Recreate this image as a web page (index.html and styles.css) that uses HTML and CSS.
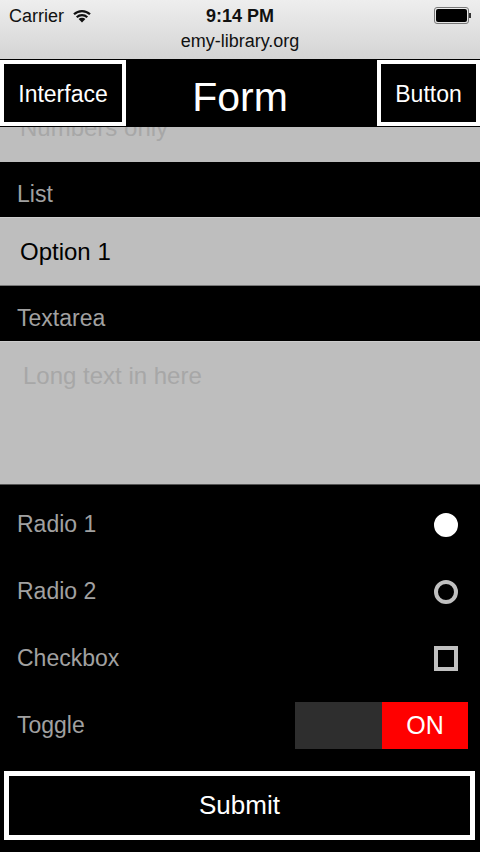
FILE: index.html
```html
<!DOCTYPE html>
<html lang="en">
<head>
  <meta charset="UTF-8" />
  <meta name="viewport" content="width=device-width, initial-scale=1.0" />
  <title>Form</title>
  <link rel="stylesheet" href="styles.css">
</head>
<body>
  <div class="chrome">
    <div class="status">
      <div class="status-left">
        <span>Carrier</span>
        <svg class="wifi" width="18" height="15" viewBox="0 0 18 15">
          <path d="M9 14.5 L5.6 11.1 A4.8 4.8 0 0 1 12.4 11.1 Z" fill="#111"/>
          <path d="M3.7 9.2 A7.8 7.8 0 0 1 14.3 9.2" fill="none" stroke="#111" stroke-width="2.2"/>
          <path d="M1 6.3 A11.6 11.6 0 0 1 17 6.3" fill="none" stroke="#111" stroke-width="2.2"/>
        </svg>
      </div>
      <div class="status-time">9:14 PM</div>
      <div class="status-right">
        <div class="battery"><div class="battery-fill"></div></div>
        <div class="battery-nub"></div>
      </div>
    </div>
    <div class="url">emy-library.org</div>
  </div>

  <div class="header">
    <button class="nav-btn nav-left">Interface</button>
    <h1 class="title">Form</h1>
    <button class="nav-btn nav-right">Button</button>
  </div>

  <form class="form">
    <div class="clip">
      <input class="field field-cut" type="text" placeholder="Numbers only">
    </div>

    <label class="label">List</label>
    <select class="field select">
      <option>Option 1</option>
      <option>Option 2</option>
    </select>

    <label class="label">Textarea</label>
    <textarea class="field textarea" placeholder="Long text in here"></textarea>

    <div class="options">
      <label class="option">
        <span>Radio 1</span>
        <input class="radio" type="radio" name="radio" checked>
      </label>
      <label class="option">
        <span>Radio 2</span>
        <input class="radio" type="radio" name="radio">
      </label>
      <label class="option">
        <span>Checkbox</span>
        <input class="check" type="checkbox">
      </label>
      <div class="option option-toggle">
        <span>Toggle</span>
        <div class="toggle">
          <div class="toggle-off"></div>
          <div class="toggle-on">ON</div>
        </div>
      </div>
    </div>

    <button class="submit" type="button">Submit</button>
  </form>
</body>
</html>
```

FILE: styles.css
```css
body {
  margin: 0;
  background: #000;
  font-family: "Liberation Sans", Arial, sans-serif;
  color: #fff;
}

/* browser chrome */
.chrome {
  height: 59px;
  background: linear-gradient(#eeeeee, #d4d4d4);
  color: #111;
  font-size: 18px;
  line-height: 20px;
}
.status {
  display: grid;
  grid-template-columns: 1fr auto 1fr;
  align-items: center;
  height: 30px;
  padding: 0 9px;
}
.status-left {
  display: flex;
  align-items: center;
  gap: 9px;
  padding-top: 2px;
}
.wifi {
  margin-top: -2px;
}
.status-time {
  font-weight: bold;
  padding-top: 2px;
}
.status-right {
  display: flex;
  justify-content: flex-end;
  align-items: center;
  padding-top: 1px;
}
.battery {
  width: 31px;
  height: 13px;
  border: 1px solid #777;
  border-radius: 3px;
  padding: 1px;
  box-sizing: content-box;
}
.battery-fill {
  height: 100%;
  background: #000;
  border-radius: 2px;
}
.battery-nub {
  width: 2px;
  height: 5px;
  background: #333;
}
.url {
  text-align: center;
  padding-top: 1px;
}

/* header */
.header {
  display: flex;
  height: 68px;
  background: #000;
}
.nav-btn {
  height: 66px;
  margin-top: 1px;
  background: #000;
  color: #fff;
  border: 4px solid #fff;
  font-family: inherit;
  font-size: 23px;
  padding: 3px 0 0;
}
.nav-left {
  width: 126px;
}
.nav-right {
  width: 103px;
  margin-left: auto;
}
.title {
  flex: 1;
  margin: 0;
  padding: 16px 23px 0 0;
  text-align: center;
  font-weight: normal;
  font-size: 41px;
  line-height: 44px;
}

/* form */
.form {
  margin: 0;
}
.clip {
  height: 35px;
  overflow: hidden;
  background: #bebebe;
}
.field {
  display: block;
  width: 100%;
  box-sizing: border-box;
  margin: 0;
  border: 0;
  border-radius: 0;
  background: #bebebe;
  font-family: inherit;
  font-size: 24px;
  color: #000;
  outline: none;
  -webkit-appearance: none;
  appearance: none;
}
.field::placeholder {
  color: #a7a7a7;
}
.field-cut {
  height: 68px;
  margin-top: -33px;
  padding: 0 20px;
}
.label {
  display: block;
  height: 55px;
  box-sizing: border-box;
  padding: 20px 17px 0;
  font-size: 23px;
  line-height: 24px;
  color: #a1a1a1;
}
.select {
  height: 69px;
  padding: 0 20px;
  border-top: 1px solid #cdcdcd;
  border-bottom: 1px solid #777;
}
.textarea {
  height: 144px;
  padding: 22px 23px;
  line-height: 24px;
  resize: none;
  border-top: 1px solid #cdcdcd;
  border-bottom: 1px solid #555;
}

.options {
  padding-top: 6px;
}
.option {
  display: flex;
  justify-content: space-between;
  align-items: center;
  height: 67px;
  padding: 0 22px 0 17px;
  font-size: 23px;
  color: #a1a1a1;
}
.option-toggle {
  padding-right: 12px;
}
.radio,
.check {
  -webkit-appearance: none;
  appearance: none;
  width: 24px;
  height: 24px;
  margin: 0;
  box-sizing: border-box;
  border: 4px solid #c0c0c0;
}
.radio {
  border-radius: 50%;
}
.radio:checked {
  background: #fff;
  border-color: #fff;
}
.check {
  height: 25px;
}
.toggle {
  display: flex;
  width: 173px;
  height: 47px;
}
.toggle-off {
  flex: 1;
  background: #2e2e2e;
}
.toggle-on {
  width: 86px;
  background: #ff0000;
  color: #fff;
  font-size: 25px;
  line-height: 47px;
  text-align: center;
}

.submit {
  display: block;
  width: calc(100% - 9px);
  height: 69px;
  margin: 12px 5px 0 4px;
  background: #000;
  color: #fff;
  border: 5px solid #fff;
  font-family: inherit;
  font-size: 26px;
}
```
